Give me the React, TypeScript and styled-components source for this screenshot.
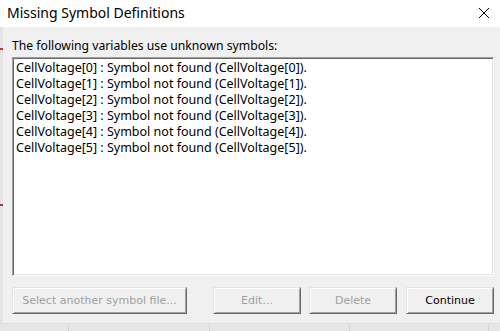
import React from "react";
import styled, { createGlobalStyle } from "styled-components";

const Global = createGlobalStyle`
  html, body { margin: 0; padding: 0; background: #e6e6e6; }
  body { width: 500px; height: 331px; overflow: hidden; }
`;

const Page = styled.div`
  width: 500px;
  height: 331px;
  display: flex;
  flex-direction: column;
  background: #e6e6e6;
  overflow: hidden;
`;

const TitleBar = styled.div`
  height: 27px;
  flex: none;
  background: #ffffff;
  display: flex;
  align-items: center;
  justify-content: space-between;
  padding: 0 10px 0 7px;
`;

const Title = styled.span`
  font-family: "Noto Sans", "Open Sans", sans-serif;
  font-size: 14px;
  color: #000;
  line-height: 27px;
  margin-top: -2px;
`;

const CloseIcon = styled.svg`
  width: 12px;
  height: 12px;
  margin-top: -2px;
`;

const DialogRow = styled.div`
  height: 296px;
  flex: none;
  display: flex;
`;

const LeftStrip = styled.div`
  width: 3px;
  flex: none;
  background: #e4e4e4;
  position: relative;
`;

const Tick = styled.span<{ $top: number; $color: string }>`
  position: absolute;
  left: 0;
  top: ${(p) => p.$top}px;
  width: 3px;
  height: 2px;
  background: ${(p) => p.$color};
`;

const Body = styled.div`
  flex: 1;
  background: #f0f0f0;
  display: flex;
  flex-direction: column;
  padding: 11px 7px 0 9px;
`;

const Label = styled.div`
  font-family: "Noto Sans", "Open Sans", sans-serif;
  font-size: 12.2px;
  line-height: 16px;
  color: #000;
`;

const ListBox = styled.div`
  margin-top: 3px;
  height: 219px;
  box-sizing: border-box;
  background: #fff;
  border-top: 1px solid #a0a0a0;
  border-left: 1px solid #a0a0a0;
  border-right: 1px solid #ffffff;
  border-bottom: 1px solid #ffffff;
  box-shadow: inset 1px 1px 0 #696969, inset -1px -1px 0 #e3e3e3;
  padding: 2px 3px;
`;

const ListItem = styled.div`
  font-family: "Noto Sans", "Open Sans", sans-serif;
  font-size: 12.5px;
  line-height: 16px;
  color: #000;
  white-space: nowrap;
`;

const ButtonRow = styled.div`
  margin-top: 11px;
  display: flex;
  align-items: center;
`;

const Button = styled.div<{ $w: number; $gap: number; $disabled?: boolean }>`
  width: ${(p) => p.$w}px;
  height: 27px;
  margin-left: ${(p) => p.$gap}px;
  box-sizing: border-box;
  background: #f0f0f0;
  border-top: 1px solid #e3e3e3;
  border-left: 1px solid #e3e3e3;
  border-right: 1px solid #696969;
  border-bottom: 1px solid #696969;
  box-shadow: inset 1px 1px 0 #ffffff, inset -1px -1px 0 #a0a0a0;
  display: flex;
  align-items: center;
  justify-content: center;
  font-family: "DejaVu Sans", "Liberation Sans", sans-serif;
  font-size: 11px;
  color: ${(p) => (p.$disabled ? "#a0a0a0" : "#000")};
`;

const Footer = styled.div`
  flex: 1;
  display: flex;
  background: #e6e6e6;
  border-top: 1px solid #dcdcdc;
`;

const FooterCell = styled.div<{ $w: number }>`
  width: ${(p) => p.$w}px;
  flex: none;
  border-right: 1px solid #d4d4d4;
`;

const items = [0, 1, 2, 3, 4, 5];

export default function App() {
  return (
    <>
      <Global />
      <Page>
        <TitleBar>
          <Title>Missing Symbol Definitions</Title>
          <CloseIcon viewBox="0 0 12 12">
            <path d="M1 1 L11 11 M11 1 L1 11" stroke="#000" strokeWidth="1" fill="none" />
          </CloseIcon>
        </TitleBar>
        <DialogRow>
          <LeftStrip>
            <Tick $top={21} $color="#c0392b" />
            <Tick $top={177} $color="#a0307a" />
          </LeftStrip>
          <Body>
            <Label>The following variables use unknown symbols:</Label>
            <ListBox>
              {items.map((i) => (
                <ListItem key={i}>
                  CellVoltage[{i}] : Symbol not found (CellVoltage[{i}]).
                </ListItem>
              ))}
            </ListBox>
            <ButtonRow>
              <Button $w={175} $gap={0} $disabled>
                Select another symbol file...
              </Button>
              <Button $w={88} $gap={26} $disabled>
                Edit...
              </Button>
              <Button $w={88} $gap={8} $disabled>
                Delete
              </Button>
              <Button $w={88} $gap={9}>
                Continue
              </Button>
            </ButtonRow>
          </Body>
        </DialogRow>
        <Footer>
          <FooterCell $w={68} />
          <FooterCell $w={140} />
          <FooterCell $w={139} />
          <FooterCell $w={138} />
        </Footer>
      </Page>
    </>
  );
}
